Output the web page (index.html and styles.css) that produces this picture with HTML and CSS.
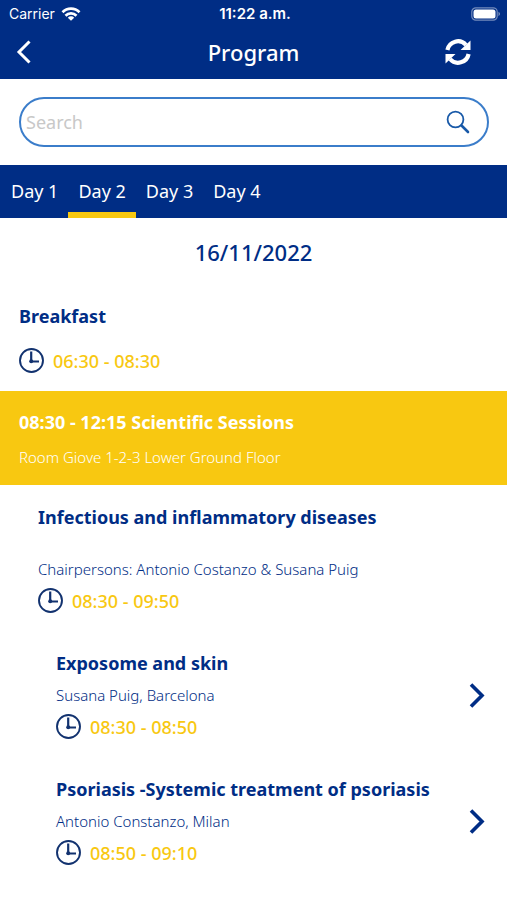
FILE: index.html
```html
<!DOCTYPE html>
<html lang="en">
<head>
<meta charset="utf-8">
<meta name="viewport" content="width=device-width, initial-scale=1">
<title>Program</title>
<link rel="stylesheet" href="styles.css">
</head>
<body>
<svg class="defs" aria-hidden="true">
  <symbol id="clock" viewBox="0 0 26 26">
    <circle cx="12.500" cy="12.500" r="11.500" fill="none" stroke="currentColor" stroke-width="1.900"/>
    <path d="M12.200 3.500V13.500H20" fill="none" stroke="currentColor" stroke-width="2.200"/>
    <circle cx="12.200" cy="13.300" r="2" fill="currentColor"/>
  </symbol>
  <symbol id="next" viewBox="0 0 16 26">
    <path d="M2 1.500L13 12.500L2 23.500" fill="none" stroke="currentColor" stroke-width="3.600"/>
  </symbol>
</svg>
<header class="header">
  <div class="status">
    <span class="carrier">Carrier
      <svg width="20" height="14" viewBox="0 0 20 14" aria-hidden="true">
        <g fill="none" stroke="currentColor" stroke-width="2.700">
          <path d="M1.500 5.200a12 12 0 0 1 17 0"/>
          <path d="M4.500 8.700a7.700 7.700 0 0 1 11 0"/>
        </g>
        <path d="M10 13.700L6.800 10.700a4.500 4.500 0 0 1 6.400 0z" fill="currentColor"/>
      </svg>
    </span>
    <span class="clock-time">11:22 a.m.</span>
    <svg class="battery" width="30" height="14" viewBox="0 0 30 14" aria-hidden="true">
      <rect x=".8" y=".8" width="25.400" height="12.400" rx="4" fill="none" stroke="#fff" stroke-opacity=".45" stroke-width="1.200"/>
      <rect x="2.500" y="2.500" width="22" height="9" rx="2.500" fill="#fff"/>
      <path d="M27.500 4.800q3 2.200 0 4.400z" fill="#fff" fill-opacity=".5"/>
    </svg>
  </div>
  <div class="titlebar">
    <button class="icon-button" type="button" aria-label="Back">
      <svg width="16" height="26" viewBox="0 0 16 26"><path d="M13.500 2.500L3 13L13.500 23.500" fill="none" stroke="currentColor" stroke-width="3"/></svg>
    </button>
    <h1 class="title">Program</h1>
    <button class="icon-button refresh" type="button" aria-label="Refresh">
      <svg width="26" height="26" viewBox="0 0 26 26">
        <path d="M2.400 11A10.700 10.700 0 0 1 21 6M23.600 15A10.700 10.700 0 0 1 5 20" fill="none" stroke="currentColor" stroke-width="4.200"/>
        <path d="M25.500 1.500V11H15.500zM.5 24.500V15H10.500z" fill="currentColor"/>
      </svg>
    </button>
  </div>
</header>
<form class="search" role="search">
  <div class="search-box">
    <input class="search-input" type="search" placeholder="Search" aria-label="Search">
    <button class="search-button" type="button" aria-label="Search">
      <svg width="24" height="24" viewBox="0 0 24 24">
        <circle cx="9.500" cy="9.500" r="7.900" fill="none" stroke="currentColor" stroke-width="1.800"/>
        <path d="M15.500 15.500L22 22" stroke="currentColor" stroke-width="2.600" stroke-linecap="round"/>
      </svg>
    </button>
  </div>
</form>
<nav class="tabs" aria-label="Days">
  <a class="tab" href="#day1">Day 1</a>
  <a class="tab active" href="#day2" aria-current="page">Day 2</a>
  <a class="tab" href="#day3">Day 3</a>
  <a class="tab" href="#day4">Day 4</a>
</nav>
<main>
  <h2 class="date">16/11/2022</h2>
  <section class="break">
    <h3 class="name">Breakfast</h3>
    <p class="time"><svg class="clock" aria-hidden="true"><use href="#clock"/></svg>06:30 - 08:30</p>
  </section>
  <section class="banner">
    <h3 class="name">08:30 - 12:15 Scientific Sessions</h3>
    <p class="detail">Room Giove 1-2-3 Lower Ground Floor</p>
  </section>
  <section class="session">
    <h3 class="name">Infectious and inflammatory diseases</h3>
    <p class="detail">Chairpersons: Antonio Costanzo &amp; Susana Puig</p>
    <p class="time"><svg class="clock" aria-hidden="true"><use href="#clock"/></svg>08:30 - 09:50</p>
  </section>
  <a class="talk" href="#exposome">
    <div>
      <h4 class="name">Exposome and skin</h4>
      <p class="detail">Susana Puig, Barcelona</p>
      <p class="time"><svg class="clock" aria-hidden="true"><use href="#clock"/></svg>08:30 - 08:50</p>
    </div>
    <svg class="next" aria-hidden="true"><use href="#next"/></svg>
  </a>
  <a class="talk" href="#psoriasis">
    <div>
      <h4 class="name">Psoriasis -Systemic treatment of psoriasis</h4>
      <p class="detail">Antonio Constanzo, Milan</p>
      <p class="time"><svg class="clock" aria-hidden="true"><use href="#clock"/></svg>08:50 - 09:10</p>
    </div>
    <svg class="next" aria-hidden="true"><use href="#next"/></svg>
  </a>
</main>
</body>
</html>
```
FILE: styles.css
```css
* { box-sizing: border-box; }

:root {
  --navy: #002d85;
  --yellow: #f8c811;
}

body {
  margin: 0;
  background: #fff;
  color: var(--navy);
  font-family: "Noto Sans", sans-serif;
}

h1, h2, h3, h4, p { margin: 0; }
a { color: inherit; text-decoration: none; }
svg { display: block; flex: none; }
button { padding: 0; border: 0; background: none; color: inherit; }

.defs { position: absolute; width: 0; height: 0; }

.header { background: var(--navy); color: #fff; }

.status {
  display: grid;
  grid-template-columns: 1fr auto 1fr;
  align-items: center;
  height: 27px;
  padding: 0 6px 0 9px;
  font: 15px/20px Inter, sans-serif;
}

.carrier { display: flex; align-items: center; gap: 6px; font-size: 14px; }
.clock-time { font-weight: 600; }
.battery { justify-self: end; }

.titlebar {
  display: grid;
  grid-template-columns: 1fr auto 1fr;
  align-items: center;
  height: 52px;
  padding: 0 36px 2px 16px;
}

.title {
  padding-left: 20px;
  font-size: 22px;
  font-weight: 500;
  line-height: 28px;
}

.refresh { justify-self: end; }

.search { padding: 18px 18px 18px 19px; }

.search-box {
  display: flex;
  align-items: center;
  height: 50px;
  padding: 0 17px 0 5px;
  border: 2px solid #3b7dca;
  border-radius: 25px;
}

.search-input {
  flex: 1;
  min-width: 0;
  padding: 0;
  border: 0;
  outline: 0;
  background: none;
  color: var(--navy);
  font: 18px/28px "Noto Sans", sans-serif;
}

.search-input::placeholder { color: #c8c8c8; opacity: 1; }
.search-button { color: #1859a8; }

.tabs {
  display: flex;
  padding-left: 1px;
  background: var(--navy);
  color: #fff;
}

.tab {
  padding: 13px 10px 7px;
  border-bottom: 6px solid transparent;
  font-size: 18px;
  line-height: 27px;
}

.active { border-color: var(--yellow); }

.date {
  padding: 20px 0;
  font-size: 22px;
  font-weight: 500;
  line-height: 28px;
  text-align: center;
}

.name { font-size: 18px; font-weight: 700; line-height: 28px; }
.detail { font-size: 15px; font-weight: 350; line-height: 24px; }

.time {
  display: flex;
  align-items: center;
  gap: 8px;
  color: var(--yellow);
  font-size: 18px;
  font-weight: 500;
  line-height: 32px;
}

.clock { width: 26px; height: 26px; color: #12326f; }

.break { padding: 16px 19px 14px; }
.break .time { margin-top: 15px; }

.banner { padding: 17px 19px 16px; background: var(--yellow); color: #fff; }
.banner .detail { margin-top: 9px; }

.session { padding: 18px 38px 0; }
.session .detail { margin-top: 26px; }
.session .time { margin-top: 4px; }

.talk {
  display: flex;
  align-items: center;
  justify-content: space-between;
  padding: 32px 22px 0 56px;
}

.talk .detail { margin-top: 6px; }
.talk .time { margin-top: 4px; }
.next { width: 16px; height: 26px; }
```
